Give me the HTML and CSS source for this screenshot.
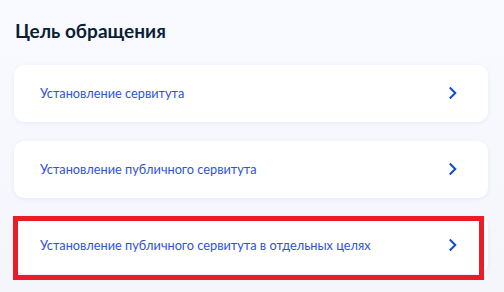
FILE: index.html
```html
<!DOCTYPE html>
<html lang="ru">

<head>
  <meta charset="UTF-8" />
  <meta name="viewport" content="width=device-width, initial-scale=1.0" />
  <title>Цель обращения</title>
  <link rel="stylesheet" href="styles.css">
</head>

<body>
  <div class="page">
    <h2 class="title">Цель обращения</h2>
    <div class="options">
      <a href="#" class="option">
        <span class="option-text">Установление сервитута</span>
        <svg class="chevron" width="8" height="12" viewBox="0 0 8 12"><path d="M1.5 1.2 L6.3 6 L1.5 10.8" /></svg>
      </a>
      <a href="#" class="option">
        <span class="option-text">Установление публичного сервитута</span>
        <svg class="chevron" width="8" height="12" viewBox="0 0 8 12"><path d="M1.5 1.2 L6.3 6 L1.5 10.8" /></svg>
      </a>
      <a href="#" class="option selected">
        <span class="option-text">Установление публичного сервитута в отдельных целях</span>
        <svg class="chevron" width="8" height="12" viewBox="0 0 8 12"><path d="M1.5 1.2 L6.3 6 L1.5 10.8" /></svg>
      </a>
    </div>
  </div>
</body>

</html>
```

FILE: styles.css
```css
html,
body {
  margin: 0;
  padding: 0;
}

body {
  width: 504px;
  height: 292px;
  overflow: hidden;
  background: linear-gradient(180deg, #f9faff 0%, #f4f6fc 100%);
  font-family: Lato, "Liberation Sans", sans-serif;
}

.page {
  padding: 18px 16px 0 14px;
}

.title {
  margin: 0 0 22px 1px;
  font-size: 19px;
  line-height: 25px;
  font-weight: 700;
  color: #0b1f33;
}

.options {
  display: flex;
  flex-direction: column;
  gap: 19px;
}

.option {
  display: flex;
  align-items: center;
  justify-content: space-between;
  height: 57px;
  padding: 0 31px 1px 26px;
  background-color: white;
  border-radius: 10px;
  box-shadow: 0 1px 4px rgba(45, 80, 170, 0.08);
  text-decoration: none;
  box-sizing: border-box;
  position: relative;
}

.option-text {
  font-size: 12.75px;
  color: #2f52dc;
}

.chevron {
  flex-shrink: 0;
}

.chevron path {
  fill: none;
  stroke: #0d4cd3;
  stroke-width: 2;
  stroke-linecap: square;
}

/* red highlight frame */
.selected:after {
  content: " ";
  position: absolute;
  left: -1px;
  top: -1px;
  right: 4px;
  bottom: -6px;
  border: 5px solid #ec1c24;
  pointer-events: none;
}
```
